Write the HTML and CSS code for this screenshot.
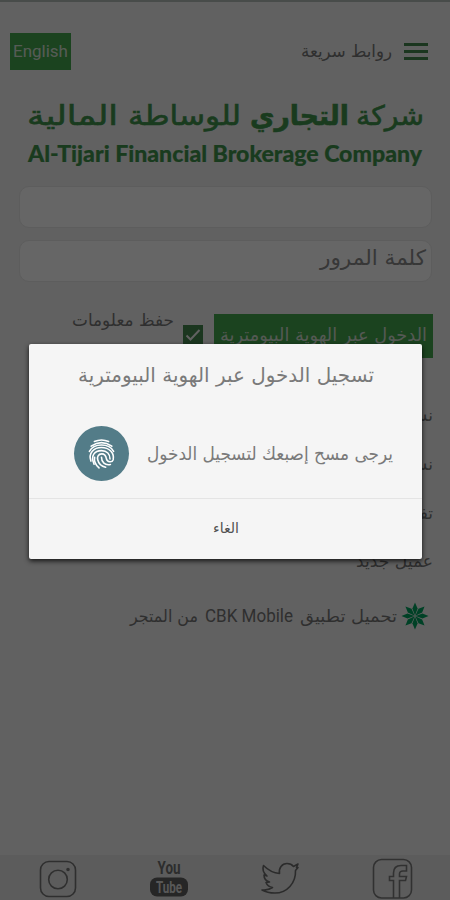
FILE: index.html
```html
<!DOCTYPE html>
<html lang="ar" dir="rtl">
<head>
    <meta charset="UTF-8">
    <meta name="viewport" content="width=device-width, initial-scale=1.0">
    <title>شركة التجاري للوساطة المالية</title>
    <link rel="stylesheet" href="styles.css">
</head>
<body>
    <div class="page">
        <header class="topbar">
            <div class="quick-links">
                <div class="burger"><span></span><span></span><span></span></div>
                <svg class="fit" width="92" height="30"><text x="92" y="21" font-size="17" textLength="91" lengthAdjust="spacingAndGlyphs">روابط سريعة</text></svg>
            </div>
            <button class="lang" dir="ltr">English</button>
        </header>

        <svg class="brand" width="450" height="84" viewBox="0 0 450 84">
            <text x="424" y="31" font-size="27" textLength="68" lengthAdjust="spacingAndGlyphs">شركة</text>
            <text class="heavy" x="349" y="31" font-size="27" textLength="99" lengthAdjust="spacingAndGlyphs">التجاري</text>
            <text x="241" y="31" font-size="27" textLength="113" lengthAdjust="spacingAndGlyphs">للوساطة</text>
            <text x="118" y="31" font-size="27" textLength="91" lengthAdjust="spacingAndGlyphs">المالية</text>
            <text class="latin" x="28" y="68" font-size="22" textLength="394" lengthAdjust="spacingAndGlyphs">Al-Tijari Financial Brokerage Company</text>
        </svg>

        <main class="login">
            <div class="field"></div>
            <div class="field">
                <svg class="fit" width="110" height="36"><text x="108" y="24" font-size="21" textLength="106" lengthAdjust="spacingAndGlyphs">كلمة المرور</text></svg>
            </div>
            <div class="actions">
                <button class="biometric">
                    <svg class="fit" width="207" height="36"><text x="207" y="23" font-size="18" textLength="207" lengthAdjust="spacingAndGlyphs">الدخول عبر الهوية البيومترية</text></svg>
                </button>
                <div class="checkbox">
                    <svg width="20" height="20" viewBox="0 0 20 20"><path d="M3.5 10.5l4 4L16.5 5" fill="none" stroke="#f2f2f2" stroke-width="2"/></svg>
                </div>
                <svg class="fit remember" width="102" height="30"><text x="102" y="12" font-size="17" textLength="102" lengthAdjust="spacingAndGlyphs">حفظ معلومات</text></svg>
            </div>
            <ul class="links">
                <li>نسيت</li>
                <li>نسيت</li>
                <li>تفعيل</li>
                <li><svg class="fit" width="78" height="34"><text x="78" y="26" font-size="17" textLength="77" lengthAdjust="spacingAndGlyphs">عميل جديد</text></svg></li>
            </ul>
            <div class="store">
                <svg width="28" height="28" viewBox="-14 -14 28 28">
                    <defs><path id="petal" d="M0-.5L-2.6-7.5 0-13.500 2.600-7.500z"/></defs>
                    <g fill="#00a35f">
                        <use href="#petal"/>
                        <use href="#petal" transform="rotate(45)"/>
                        <use href="#petal" transform="rotate(90)"/>
                        <use href="#petal" transform="rotate(135)"/>
                        <use href="#petal" transform="rotate(180)"/>
                        <use href="#petal" transform="rotate(225)"/>
                        <use href="#petal" transform="rotate(270)"/>
                        <use href="#petal" transform="rotate(315)"/>
                    </g>
                </svg>
                <svg class="fit" width="268" height="34">
                    <text x="268" y="23" font-size="17" textLength="97" lengthAdjust="spacingAndGlyphs">تحميل تطبيق</text>
                    <text class="roboto" x="76" y="23" font-size="17.5" textLength="88" lengthAdjust="spacingAndGlyphs">CBK Mobile</text>
                    <text x="69" y="23" font-size="17" textLength="68" lengthAdjust="spacingAndGlyphs">من المتجر</text>
                </svg>
            </div>
        </main>

        <footer class="social" dir="ltr">
            <svg width="38" height="40" viewBox="0 0 38 40" fill="none" stroke="#777" stroke-width="1.6">
                <rect x="1.5" y="2.5" width="35" height="35" rx="8.5"/>
                <circle cx="19" cy="20.5" r="9.3"/>
                <circle cx="29" cy="10.5" r="1" fill="#777"/>
            </svg>
            <svg width="40" height="40" viewBox="0 0 40 40">
                <text class="tube" x="8.5" y="15" font-size="18" textLength="23" lengthAdjust="spacingAndGlyphs" fill="#707070">You</text>
                <rect x="1" y="18.5" width="38" height="19" rx="7" fill="#606060"/>
                <text class="tube" x="7" y="34" font-size="17" textLength="26" lengthAdjust="spacingAndGlyphs" fill="#dcdcdc">Tube</text>
            </svg>
            <svg width="40" height="40" viewBox="0 0 40 40" fill="none" stroke="#6c6c6c" stroke-width="1.6" stroke-linejoin="round">
                <path d="M3.5 6.500C8 11 13 14 19.500 14.500C18.500 9 22 4.500 27 4.500C30 4.500 32 5.500 33.500 7.500L38 5L36.500 8.500L38 8.500L35.500 11.500C36 24 27 34 15 34C10 34 5.500 33 2 31C6 31.500 9.500 30.500 12.500 28.500C9 28 7 26 6 23.500L9.500 23C6 22 4 19 4 16L7 17C3.500 14 2 10.500 3.500 6.500Z"/>
            </svg>
            <svg width="42" height="42" viewBox="0 0 42 42" fill="none" stroke="#7c7c7c" stroke-width="1.6">
                <rect x="1.5" y="1.5" width="38" height="38.5" rx="8"/>
                <path d="M21.500 40V22.500H17.500V18.500H21.500V15C21.500 10 24.500 7.500 29 7.500H34.500V13H31C28.500 13 27.500 14 27.500 16V18.500H34.500L33.500 22.500H27.500V40"/>
            </svg>
        </footer>
    </div>

    <div class="overlay">
        <div class="dialog">
            <div class="dialog-title">
                <svg class="fit" width="300" height="40"><text x="298" y="24" font-size="20" textLength="296" lengthAdjust="spacingAndGlyphs">تسجيل الدخول عبر الهوية البيومترية</text></svg>
            </div>
            <div class="dialog-body">
                <svg class="fit" width="248" height="36"><text x="247" y="24" font-size="18" textLength="246" lengthAdjust="spacingAndGlyphs">يرجى مسح إصبعك لتسجيل الدخول</text></svg>
                <div class="finger">
                    <svg width="33" height="33" viewBox="0 0 24 24" fill="none" stroke="#fff" stroke-width="1.15" stroke-linecap="round">
                        <path d="M6.800 3.300Q12 1 17.200 3.300"/>
                        <path d="M4.500 6.700Q12 1.500 19.500 6.700"/>
                        <path d="M3.200 10.500C6.500 4.300 17.500 4.300 20.800 10.500"/>
                        <path d="M4.300 17.500C2.200 11.500 6.500 7.600 12 7.600S21.500 11.500 20.500 16.500C19.800 18.600 16.200 18.500 15.600 16C15.200 13.500 14.300 12.300 12.200 12.300C9.500 12.300 8.700 14.600 9.300 16.700C10 19.500 12.200 21.400 15 22"/>
                        <path d="M6.600 19.800C3.800 13.500 7 9.900 12 9.900C16 9.900 18.200 12.500 18.200 16"/>
                        <path d="M10.200 22.500C7.500 20 6.500 16.800 7 14.700"/>
                        <path d="M12 14.700C12 18.500 14.500 20.800 18.500 20"/>
                    </svg>
                </div>
            </div>
            <button class="cancel">
                <svg class="fit" width="28" height="26"><text x="27" y="17" font-size="14" textLength="26" lengthAdjust="spacingAndGlyphs">الغاء</text></svg>
            </button>
        </div>
    </div>
</body>
</html>
```

FILE: styles.css
```css
* {
    box-sizing: border-box;
}
body {
    margin: 0;
    font-family: 'DejaVu Sans', sans-serif;
    color: #777;
}
button {
    border: 0;
    padding: 0;
    font-family: inherit;
}
svg {
    display: block;
    flex: none;
    overflow: visible;
}
.page {
    height: 900px;
    background: #f2f2f2;
    border-top: 2px solid #b4beb8;
    display: flex;
    flex-direction: column;
    overflow: hidden;
}
.fit {
    fill: currentColor;
}
.topbar {
    display: flex;
    justify-content: space-between;
    align-items: flex-start;
    height: 92px;
    padding: 31px 22px 0 10px;
}
.quick-links {
    display: flex;
    gap: 12px;
    align-items: center;
    padding-top: 3px;
}
.burger {
    width: 24px;
    display: grid;
    gap: 4px;
}
.burger span {
    height: 3px;
    background: #44884f;
}
.lang {
    width: 61px;
    height: 37px;
    background: #44a84e;
    color: #d8e4d8;
    font: 17px Roboto, sans-serif;
    padding-bottom: 2px;
}
.brand {
    fill: #40944d;
    stroke: #40944d;
    stroke-width: 0.6px;
}
.heavy {
    font-weight: bold;
}
.latin {
    direction: ltr;
    font-family: Lato, sans-serif;
    font-weight: 900;
    stroke-width: 0.2px;
}
.roboto {
    direction: ltr;
    font-family: Roboto, sans-serif;
}
.login {
    padding: 8px 17px 0 19px;
    flex: 1;
}
.field {
    width: 413px;
    height: 42px;
    margin: 0 1px 12px;
    padding: 0 3px;
    background: #fff;
    border: 1px solid #e8e8e8;
    border-radius: 10px;
    color: #8a8a8a;
}
.actions {
    display: flex;
    margin-top: 32px;
    height: 44px;
}
.biometric {
    width: 219px;
    height: 44px;
    padding: 0 6px;
    background: #44a84e;
    color: #d2ded2;
}
.checkbox {
    width: 20px;
    height: 20px;
    margin: 11px 11px 0 9px;
    background: #44884f;
}
.links {
    list-style: none;
    margin: 36px 0 0;
    padding: 0;
    font-size: 17px;
}
.links li {
    height: 49px;
    line-height: 42px;
}
.store {
    display: flex;
    gap: 4px;
    align-items: center;
    padding: 9px 4px 0 0;
}
.social {
    display: flex;
    justify-content: space-between;
    align-items: center;
    height: 45px;
    padding: 2px 36px 0 39px;
    background: #e6e6e6;
}
.tube {
    font-family: Roboto, sans-serif;
    font-weight: bold;
}
.overlay {
    position: absolute;
    inset: 0;
    background: rgba(0, 0, 0, 0.6);
    display: flex;
    align-items: flex-start;
    padding: 344px 28px 0;
}
.dialog {
    width: 393px;
    height: 215px;
    background: #f5f5f5;
    border-radius: 2px;
    box-shadow: 0 2px 5px rgba(0, 0, 0, 0.8);
    color: #7a7a7a;
}
.dialog-title {
    height: 71px;
    display: flex;
    justify-content: center;
    padding: 14px 0 0 0;
}
.dialog-body {
    height: 84px;
    display: flex;
    gap: 17px;
    align-items: center;
    padding: 0 28px 6px 0;
    border-bottom: 1px solid #e4e4e4;
}
.finger {
    width: 55px;
    height: 55px;
    border-radius: 50%;
    background: #537c88;
    display: grid;
    place-items: center;
}
.cancel {
    width: 100%;
    height: 60px;
    background: none;
    color: #505050;
    display: grid;
    place-items: center;
}
```
